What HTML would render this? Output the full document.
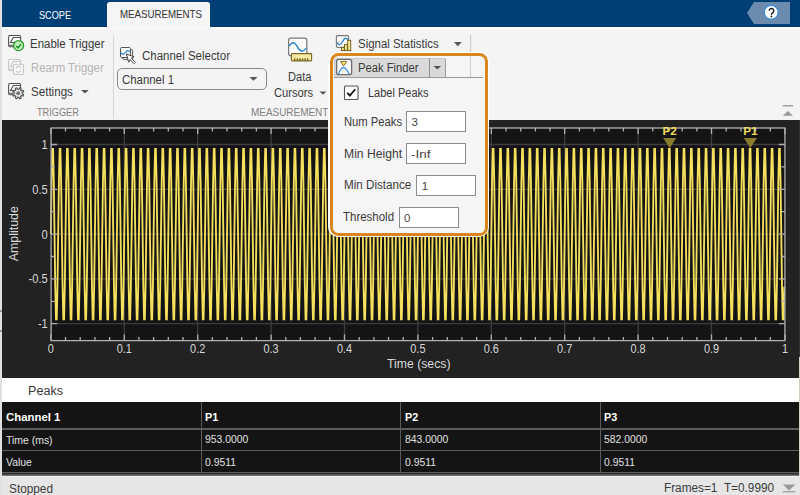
<!DOCTYPE html>
<html><head><meta charset="utf-8">
<style>
html,body{margin:0;padding:0;}
body{width:800px;height:495px;position:relative;overflow:hidden;background:#e0e0e0;font-family:"Liberation Sans",sans-serif;}
.a{position:absolute;box-sizing:border-box;}
.t{position:absolute;white-space:nowrap;line-height:1;transform-origin:0 0;font-family:"Liberation Sans",sans-serif;}
svg{position:absolute;left:0;top:0;}
svg text{font-family:"Liberation Sans",sans-serif;}
</style></head><body>
<!-- tab bar -->
<div class="a" style="left:2px;top:0;width:798px;height:27px;background:#003f75;"></div>
<div class="a" style="left:2px;top:27px;width:798px;height:1.5px;background:#fcfcfc;"></div>
<div class="a" style="left:107px;top:2px;width:103px;height:26px;background:#f5f5f5;border-radius:3px 3px 0 0;border:1px solid #fafafa;border-bottom:none;"></div>
<!-- help -->
<svg width="800" height="30" style="left:0;top:0">
<path d="M754 2H790V24H754L747 13Z" fill="#6b8cae"/>
<circle cx="771.2" cy="12.3" r="6.9" fill="#fff" stroke="#3d8ee0" stroke-width="1.2"/>
<path d="M769.2 10.8a2.3 2.3 0 1 1 3.7 1.8q-1.4 0.9-1.4 1.9v0.3" stroke="#1a1a1a" stroke-width="1.4" fill="none"/><circle cx="771.5" cy="16.4" r="0.9" fill="#1a1a1a"/>
</svg>
<!-- toolstrip -->
<div class="a" style="left:2px;top:28.5px;width:798px;height:91.5px;background:#f4f4f4;"></div>
<div class="a" style="left:113px;top:35px;width:1px;height:84px;background:#d6d6d6;"></div>
<!-- channel dropdown -->
<div class="a" style="left:117px;top:68px;width:150px;height:22px;border:1px solid #8a8a8a;border-radius:5px;background:#f4f4f4;"></div>
<svg width="800" height="120" style="left:0;top:0">
<path d="M249.5 77h8l-4 3.8z" fill="#555"/>
<path d="M81 90h7.7l-3.85 3.6z" fill="#555"/>
<path d="M319.5 91.5h7l-3.5 3.2z" fill="#555"/>
<path d="M454 42.1h7.7l-3.85 4.1z" fill="#555"/>
<!-- enable trigger icon -->
<g fill="none" stroke="#505050" stroke-width="1.05">
<rect x="8.6" y="35.5" width="12" height="11.2" rx="1.2" fill="#fafafa"/>
<path d="M9 45.2h11.2M14.2 42.4h-3.8l3.1-4.9h6.7"/>
</g>
<circle cx="18.6" cy="45.6" r="5" fill="#c3efc0" stroke="#23a023" stroke-width="1.3"/>
<path d="M16.2 45.9l1.8 1.8 3-3.4" stroke="#138c13" stroke-width="1.4" fill="none"/>
<!-- rearm icon -->
<g fill="none" stroke="#c6c6c6" stroke-width="1.05">
<rect x="8.6" y="59.5" width="12" height="11.2" rx="1.2" fill="#f7f7f7"/>
<path d="M9 69.2h4M13.5 66.4h-3.1l3.1-4.9h6.7"/>
<rect x="13.5" y="64.2" width="10" height="10.3" rx="1.2" fill="#f7f7f7"/>
<path d="M16 68.3a2.7 2.7 0 0 1 4.8-0.8M21 70.3a2.7 2.7 0 0 1-4.8 0.8" stroke-width="1.1"/>
</g>
<!-- settings icon -->
<g fill="none" stroke="#505050" stroke-width="1.05">
<rect x="8.6" y="83.5" width="12" height="11.2" rx="1.2" fill="#fafafa"/>
<path d="M9 93.2h4M14.2 90.4h-3.8l3.1-4.9h6.7"/>
</g>
<path d="M22.15 93.83 L23.73 94.57 L23.08 96.14 L21.44 95.55 L20.55 96.44 L21.14 98.08 L19.57 98.73 L18.83 97.15 L17.57 97.15 L16.83 98.73 L15.26 98.08 L15.85 96.44 L14.96 95.55 L13.32 96.14 L12.67 94.57 L14.25 93.83 L14.25 92.57 L12.67 91.83 L13.32 90.26 L14.96 90.85 L15.85 89.96 L15.26 88.32 L16.83 87.67 L17.57 89.25 L18.83 89.25 L19.57 87.67 L21.14 88.32 L20.55 89.96 L21.44 90.85 L23.08 90.26 L23.73 91.83 L22.15 92.57Z" fill="#e6e6e6" stroke="#4a4a4a" stroke-width="1.05" stroke-linejoin="round"/>
<circle cx="18.2" cy="93.2" r="1.9" fill="#707070"/>
<!-- channel selector icon -->
<rect x="122.6" y="49.5" width="10" height="9.8" rx="1" fill="#f5f5f5" stroke="#555" stroke-width="1"/>
<rect x="120.5" y="47.5" width="10" height="10" rx="1.2" fill="#fafafa" stroke="#555" stroke-width="1"/>
<path d="M121 52.8C122.5 55 124.5 54 125.5 52.5C126.5 50.8 128.5 49.5 130.2 52" stroke="#2a86d6" stroke-width="1.2" fill="none"/>
<path d="M126.4 54L134 56.8L131.4 58.3L135.4 62.3L134 63.7L130 59.7L128.6 62.2Z" fill="#fff" stroke="#444" stroke-width="1" stroke-linejoin="round"/>
<!-- data cursors icon -->
<rect x="288.6" y="38.2" width="18.2" height="17.4" rx="2.2" fill="#fbfbfb" stroke="#777" stroke-width="1.2"/>
<path d="M289.3 46q2-3.5 4-3.3t4.2 4.2t4.3 4.3t4.2-3.2" stroke="#2a86d6" stroke-width="1.4" fill="none"/>
<rect x="291.4" y="53.6" width="20.2" height="7.3" rx="0.8" fill="#f8eda5" stroke="#7a6420" stroke-width="1.1"/>
<path d="M294 60.4l0.7-2.2l0.7 2.2M296.6 60.4l0.7-2.2l0.7 2.2M299.2 60.4l0.7-2.2l0.7 2.2M301.8 60.4l0.7-2.2l0.7 2.2M304.4 60.4l0.7-2.2l0.7 2.2M307 60.4l0.7-2.2l0.7 2.2" fill="#7a6420" stroke="#7a6420" stroke-width="0.7"/>
<!-- signal statistics icon -->
<rect x="336.4" y="35.6" width="12.2" height="11.8" rx="1.5" fill="#fbfbfb" stroke="#777" stroke-width="1.1"/>
<path d="M337 42.4q1.3 2.4 2.8 2.3t3-3.4t3-3t2.2 1.4" stroke="#2a86d6" stroke-width="1.3" fill="none"/>
<g fill="#f7e98e" stroke="#6b5418" stroke-width="0.9">
<rect x="341.5" y="47.6" width="2.8" height="3"/>
<rect x="344.5" y="44.6" width="2.8" height="6"/>
<rect x="347.7" y="40.3" width="3" height="10.3"/>
</g>
<path d="M470.6 35v43" stroke="#cfcfcf" stroke-width="1.2"/>
</svg>
<!-- plot panel -->
<div class="a" style="left:2px;top:120px;width:796.8px;height:257.5px;background:#222222;"></div>
<div class="a" style="left:798.8px;top:120px;width:1.2px;height:237px;background:#333333;"></div>
<div class="a" style="left:798.8px;top:357px;width:1.2px;height:138px;background:#d4d0c0;"></div>
<!-- collapse arrow -->
<svg width="800" height="495" style="left:0;top:0">
<path d="M782.7 105.8h10.3" stroke="#9a9a9a" stroke-width="1.4"/>
<path d="M782.7 115.7l5.15-4.6 5.15 4.6z" fill="#9a9a9a"/>
<rect x='51.1' y='128' width='733.8' height='212.6' fill='#141414'/>
<line x1='124.3' y1='128' x2='124.3' y2='340.6' stroke='#3e3e3e' stroke-width='1.3'/>
<line x1='197.7' y1='128' x2='197.7' y2='340.6' stroke='#3e3e3e' stroke-width='1.3'/>
<line x1='271.1' y1='128' x2='271.1' y2='340.6' stroke='#3e3e3e' stroke-width='1.3'/>
<line x1='344.5' y1='128' x2='344.5' y2='340.6' stroke='#3e3e3e' stroke-width='1.3'/>
<line x1='417.9' y1='128' x2='417.9' y2='340.6' stroke='#3e3e3e' stroke-width='1.3'/>
<line x1='491.3' y1='128' x2='491.3' y2='340.6' stroke='#3e3e3e' stroke-width='1.3'/>
<line x1='564.7' y1='128' x2='564.7' y2='340.6' stroke='#3e3e3e' stroke-width='1.3'/>
<line x1='638.1' y1='128' x2='638.1' y2='340.6' stroke='#3e3e3e' stroke-width='1.3'/>
<line x1='711.5' y1='128' x2='711.5' y2='340.6' stroke='#3e3e3e' stroke-width='1.3'/>
<line x1='51.1' y1='144.5' x2='784.9' y2='144.5' stroke='#3e3e3e' stroke-width='1.3'/>
<line x1='51.1' y1='189.3' x2='784.9' y2='189.3' stroke='#3e3e3e' stroke-width='1.3'/>
<line x1='51.1' y1='234.1' x2='784.9' y2='234.1' stroke='#3e3e3e' stroke-width='1.3'/>
<line x1='51.1' y1='278.9' x2='784.9' y2='278.9' stroke='#3e3e3e' stroke-width='1.3'/>
<line x1='51.1' y1='323.7' x2='784.9' y2='323.7' stroke='#3e3e3e' stroke-width='1.3'/>
<polyline points='50.85,234.1 51.58,181.4 52.32,148.9 53.05,148.9 53.79,181.4 54.52,234.1 55.25,286.8 55.99,319.3 56.72,319.3 57.46,286.8 58.19,234.1 58.93,181.4 59.66,148.9 60.39,148.9 61.13,181.4 61.86,234.1 62.60,286.8 63.33,319.3 64.06,319.3 64.80,286.8 65.53,234.1 66.27,181.4 67.00,148.9 67.73,148.9 68.47,181.4 69.20,234.1 69.94,286.8 70.67,319.3 71.40,319.3 72.14,286.8 72.87,234.1 73.61,181.4 74.34,148.9 75.08,148.9 75.81,181.4 76.54,234.1 77.28,286.8 78.01,319.3 78.75,319.3 79.48,286.8 80.21,234.1 80.95,181.4 81.68,148.9 82.42,148.9 83.15,181.4 83.88,234.1 84.62,286.8 85.35,319.3 86.09,319.3 86.82,286.8 87.56,234.1 88.29,181.4 89.02,148.9 89.76,148.9 90.49,181.4 91.23,234.1 91.96,286.8 92.69,319.3 93.43,319.3 94.16,286.8 94.90,234.1 95.63,181.4 96.36,148.9 97.10,148.9 97.83,181.4 98.57,234.1 99.30,286.8 100.03,319.3 100.77,319.3 101.50,286.8 102.24,234.1 102.97,181.4 103.71,148.9 104.44,148.9 105.17,181.4 105.91,234.1 106.64,286.8 107.38,319.3 108.11,319.3 108.84,286.8 109.58,234.1 110.31,181.4 111.05,148.9 111.78,148.9 112.51,181.4 113.25,234.1 113.98,286.8 114.72,319.3 115.45,319.3 116.18,286.8 116.92,234.1 117.65,181.4 118.39,148.9 119.12,148.9 119.86,181.4 120.59,234.1 121.32,286.8 122.06,319.3 122.79,319.3 123.53,286.8 124.26,234.1 124.99,181.4 125.73,148.9 126.46,148.9 127.20,181.4 127.93,234.1 128.66,286.8 129.40,319.3 130.13,319.3 130.87,286.8 131.60,234.1 132.34,181.4 133.07,148.9 133.80,148.9 134.54,181.4 135.27,234.1 136.01,286.8 136.74,319.3 137.47,319.3 138.21,286.8 138.94,234.1 139.68,181.4 140.41,148.9 141.14,148.9 141.88,181.4 142.61,234.1 143.35,286.8 144.08,319.3 144.81,319.3 145.55,286.8 146.28,234.1 147.02,181.4 147.75,148.9 148.49,148.9 149.22,181.4 149.95,234.1 150.69,286.8 151.42,319.3 152.16,319.3 152.89,286.8 153.62,234.1 154.36,181.4 155.09,148.9 155.83,148.9 156.56,181.4 157.29,234.1 158.03,286.8 158.76,319.3 159.50,319.3 160.23,286.8 160.97,234.1 161.70,181.4 162.43,148.9 163.17,148.9 163.90,181.4 164.64,234.1 165.37,286.8 166.10,319.3 166.84,319.3 167.57,286.8 168.31,234.1 169.04,181.4 169.77,148.9 170.51,148.9 171.24,181.4 171.98,234.1 172.71,286.8 173.44,319.3 174.18,319.3 174.91,286.8 175.65,234.1 176.38,181.4 177.12,148.9 177.85,148.9 178.58,181.4 179.32,234.1 180.05,286.8 180.79,319.3 181.52,319.3 182.25,286.8 182.99,234.1 183.72,181.4 184.46,148.9 185.19,148.9 185.92,181.4 186.66,234.1 187.39,286.8 188.13,319.3 188.86,319.3 189.59,286.8 190.33,234.1 191.06,181.4 191.80,148.9 192.53,148.9 193.27,181.4 194.00,234.1 194.73,286.8 195.47,319.3 196.20,319.3 196.94,286.8 197.67,234.1 198.40,181.4 199.14,148.9 199.87,148.9 200.61,181.4 201.34,234.1 202.07,286.8 202.81,319.3 203.54,319.3 204.28,286.8 205.01,234.1 205.75,181.4 206.48,148.9 207.21,148.9 207.95,181.4 208.68,234.1 209.42,286.8 210.15,319.3 210.88,319.3 211.62,286.8 212.35,234.1 213.09,181.4 213.82,148.9 214.55,148.9 215.29,181.4 216.02,234.1 216.76,286.8 217.49,319.3 218.22,319.3 218.96,286.8 219.69,234.1 220.43,181.4 221.16,148.9 221.90,148.9 222.63,181.4 223.36,234.1 224.10,286.8 224.83,319.3 225.57,319.3 226.30,286.8 227.03,234.1 227.77,181.4 228.50,148.9 229.24,148.9 229.97,181.4 230.70,234.1 231.44,286.8 232.17,319.3 232.91,319.3 233.64,286.8 234.38,234.1 235.11,181.4 235.84,148.9 236.58,148.9 237.31,181.4 238.05,234.1 238.78,286.8 239.51,319.3 240.25,319.3 240.98,286.8 241.72,234.1 242.45,181.4 243.18,148.9 243.92,148.9 244.65,181.4 245.39,234.1 246.12,286.8 246.85,319.3 247.59,319.3 248.32,286.8 249.06,234.1 249.79,181.4 250.53,148.9 251.26,148.9 251.99,181.4 252.73,234.1 253.46,286.8 254.20,319.3 254.93,319.3 255.66,286.8 256.40,234.1 257.13,181.4 257.87,148.9 258.60,148.9 259.33,181.4 260.07,234.1 260.80,286.8 261.54,319.3 262.27,319.3 263.00,286.8 263.74,234.1 264.47,181.4 265.21,148.9 265.94,148.9 266.68,181.4 267.41,234.1 268.14,286.8 268.88,319.3 269.61,319.3 270.35,286.8 271.08,234.1 271.81,181.4 272.55,148.9 273.28,148.9 274.02,181.4 274.75,234.1 275.48,286.8 276.22,319.3 276.95,319.3 277.69,286.8 278.42,234.1 279.16,181.4 279.89,148.9 280.62,148.9 281.36,181.4 282.09,234.1 282.83,286.8 283.56,319.3 284.29,319.3 285.03,286.8 285.76,234.1 286.50,181.4 287.23,148.9 287.96,148.9 288.70,181.4 289.43,234.1 290.17,286.8 290.90,319.3 291.63,319.3 292.37,286.8 293.10,234.1 293.84,181.4 294.57,148.9 295.31,148.9 296.04,181.4 296.77,234.1 297.51,286.8 298.24,319.3 298.98,319.3 299.71,286.8 300.44,234.1 301.18,181.4 301.91,148.9 302.65,148.9 303.38,181.4 304.11,234.1 304.85,286.8 305.58,319.3 306.32,319.3 307.05,286.8 307.79,234.1 308.52,181.4 309.25,148.9 309.99,148.9 310.72,181.4 311.46,234.1 312.19,286.8 312.92,319.3 313.66,319.3 314.39,286.8 315.13,234.1 315.86,181.4 316.59,148.9 317.33,148.9 318.06,181.4 318.80,234.1 319.53,286.8 320.26,319.3 321.00,319.3 321.73,286.8 322.47,234.1 323.20,181.4 323.94,148.9 324.67,148.9 325.40,181.4 326.14,234.1 326.87,286.8 327.61,319.3 328.34,319.3 329.07,286.8 329.81,234.1 330.54,181.4 331.28,148.9 332.01,148.9 332.74,181.4 333.48,234.1 334.21,286.8 334.95,319.3 335.68,319.3 336.41,286.8 337.15,234.1 337.88,181.4 338.62,148.9 339.35,148.9 340.09,181.4 340.82,234.1 341.55,286.8 342.29,319.3 343.02,319.3 343.76,286.8 344.49,234.1 345.22,181.4 345.96,148.9 346.69,148.9 347.43,181.4 348.16,234.1 348.89,286.8 349.63,319.3 350.36,319.3 351.10,286.8 351.83,234.1 352.57,181.4 353.30,148.9 354.03,148.9 354.77,181.4 355.50,234.1 356.24,286.8 356.97,319.3 357.70,319.3 358.44,286.8 359.17,234.1 359.91,181.4 360.64,148.9 361.37,148.9 362.11,181.4 362.84,234.1 363.58,286.8 364.31,319.3 365.04,319.3 365.78,286.8 366.51,234.1 367.25,181.4 367.98,148.9 368.72,148.9 369.45,181.4 370.18,234.1 370.92,286.8 371.65,319.3 372.39,319.3 373.12,286.8 373.85,234.1 374.59,181.4 375.32,148.9 376.06,148.9 376.79,181.4 377.52,234.1 378.26,286.8 378.99,319.3 379.73,319.3 380.46,286.8 381.20,234.1 381.93,181.4 382.66,148.9 383.40,148.9 384.13,181.4 384.87,234.1 385.60,286.8 386.33,319.3 387.07,319.3 387.80,286.8 388.54,234.1 389.27,181.4 390.00,148.9 390.74,148.9 391.47,181.4 392.21,234.1 392.94,286.8 393.67,319.3 394.41,319.3 395.14,286.8 395.88,234.1 396.61,181.4 397.35,148.9 398.08,148.9 398.81,181.4 399.55,234.1 400.28,286.8 401.02,319.3 401.75,319.3 402.48,286.8 403.22,234.1 403.95,181.4 404.69,148.9 405.42,148.9 406.15,181.4 406.89,234.1 407.62,286.8 408.36,319.3 409.09,319.3 409.82,286.8 410.56,234.1 411.29,181.4 412.03,148.9 412.76,148.9 413.50,181.4 414.23,234.1 414.96,286.8 415.70,319.3 416.43,319.3 417.17,286.8 417.90,234.1 418.63,181.4 419.37,148.9 420.10,148.9 420.84,181.4 421.57,234.1 422.30,286.8 423.04,319.3 423.77,319.3 424.51,286.8 425.24,234.1 425.98,181.4 426.71,148.9 427.44,148.9 428.18,181.4 428.91,234.1 429.65,286.8 430.38,319.3 431.11,319.3 431.85,286.8 432.58,234.1 433.32,181.4 434.05,148.9 434.78,148.9 435.52,181.4 436.25,234.1 436.99,286.8 437.72,319.3 438.45,319.3 439.19,286.8 439.92,234.1 440.66,181.4 441.39,148.9 442.13,148.9 442.86,181.4 443.59,234.1 444.33,286.8 445.06,319.3 445.80,319.3 446.53,286.8 447.26,234.1 448.00,181.4 448.73,148.9 449.47,148.9 450.20,181.4 450.93,234.1 451.67,286.8 452.40,319.3 453.14,319.3 453.87,286.8 454.61,234.1 455.34,181.4 456.07,148.9 456.81,148.9 457.54,181.4 458.28,234.1 459.01,286.8 459.74,319.3 460.48,319.3 461.21,286.8 461.95,234.1 462.68,181.4 463.41,148.9 464.15,148.9 464.88,181.4 465.62,234.1 466.35,286.8 467.08,319.3 467.82,319.3 468.55,286.8 469.29,234.1 470.02,181.4 470.76,148.9 471.49,148.9 472.22,181.4 472.96,234.1 473.69,286.8 474.43,319.3 475.16,319.3 475.89,286.8 476.63,234.1 477.36,181.4 478.10,148.9 478.83,148.9 479.56,181.4 480.30,234.1 481.03,286.8 481.77,319.3 482.50,319.3 483.23,286.8 483.97,234.1 484.70,181.4 485.44,148.9 486.17,148.9 486.91,181.4 487.64,234.1 488.37,286.8 489.11,319.3 489.84,319.3 490.58,286.8 491.31,234.1 492.04,181.4 492.78,148.9 493.51,148.9 494.25,181.4 494.98,234.1 495.71,286.8 496.45,319.3 497.18,319.3 497.92,286.8 498.65,234.1 499.39,181.4 500.12,148.9 500.85,148.9 501.59,181.4 502.32,234.1 503.06,286.8 503.79,319.3 504.52,319.3 505.26,286.8 505.99,234.1 506.73,181.4 507.46,148.9 508.19,148.9 508.93,181.4 509.66,234.1 510.40,286.8 511.13,319.3 511.86,319.3 512.60,286.8 513.33,234.1 514.07,181.4 514.80,148.9 515.54,148.9 516.27,181.4 517.00,234.1 517.74,286.8 518.47,319.3 519.21,319.3 519.94,286.8 520.67,234.1 521.41,181.4 522.14,148.9 522.88,148.9 523.61,181.4 524.34,234.1 525.08,286.8 525.81,319.3 526.55,319.3 527.28,286.8 528.01,234.1 528.75,181.4 529.48,148.9 530.22,148.9 530.95,181.4 531.69,234.1 532.42,286.8 533.15,319.3 533.89,319.3 534.62,286.8 535.36,234.1 536.09,181.4 536.82,148.9 537.56,148.9 538.29,181.4 539.03,234.1 539.76,286.8 540.49,319.3 541.23,319.3 541.96,286.8 542.70,234.1 543.43,181.4 544.17,148.9 544.90,148.9 545.63,181.4 546.37,234.1 547.10,286.8 547.84,319.3 548.57,319.3 549.30,286.8 550.04,234.1 550.77,181.4 551.51,148.9 552.24,148.9 552.97,181.4 553.71,234.1 554.44,286.8 555.18,319.3 555.91,319.3 556.64,286.8 557.38,234.1 558.11,181.4 558.85,148.9 559.58,148.9 560.32,181.4 561.05,234.1 561.78,286.8 562.52,319.3 563.25,319.3 563.99,286.8 564.72,234.1 565.45,181.4 566.19,148.9 566.92,148.9 567.66,181.4 568.39,234.1 569.12,286.8 569.86,319.3 570.59,319.3 571.33,286.8 572.06,234.1 572.80,181.4 573.53,148.9 574.26,148.9 575.00,181.4 575.73,234.1 576.47,286.8 577.20,319.3 577.93,319.3 578.67,286.8 579.40,234.1 580.14,181.4 580.87,148.9 581.60,148.9 582.34,181.4 583.07,234.1 583.81,286.8 584.54,319.3 585.27,319.3 586.01,286.8 586.74,234.1 587.48,181.4 588.21,148.9 588.95,148.9 589.68,181.4 590.41,234.1 591.15,286.8 591.88,319.3 592.62,319.3 593.35,286.8 594.08,234.1 594.82,181.4 595.55,148.9 596.29,148.9 597.02,181.4 597.75,234.1 598.49,286.8 599.22,319.3 599.96,319.3 600.69,286.8 601.43,234.1 602.16,181.4 602.89,148.9 603.63,148.9 604.36,181.4 605.10,234.1 605.83,286.8 606.56,319.3 607.30,319.3 608.03,286.8 608.77,234.1 609.50,181.4 610.23,148.9 610.97,148.9 611.70,181.4 612.44,234.1 613.17,286.8 613.90,319.3 614.64,319.3 615.37,286.8 616.11,234.1 616.84,181.4 617.58,148.9 618.31,148.9 619.04,181.4 619.78,234.1 620.51,286.8 621.25,319.3 621.98,319.3 622.71,286.8 623.45,234.1 624.18,181.4 624.92,148.9 625.65,148.9 626.38,181.4 627.12,234.1 627.85,286.8 628.59,319.3 629.32,319.3 630.05,286.8 630.79,234.1 631.52,181.4 632.26,148.9 632.99,148.9 633.73,181.4 634.46,234.1 635.19,286.8 635.93,319.3 636.66,319.3 637.40,286.8 638.13,234.1 638.86,181.4 639.60,148.9 640.33,148.9 641.07,181.4 641.80,234.1 642.53,286.8 643.27,319.3 644.00,319.3 644.74,286.8 645.47,234.1 646.21,181.4 646.94,148.9 647.67,148.9 648.41,181.4 649.14,234.1 649.88,286.8 650.61,319.3 651.34,319.3 652.08,286.8 652.81,234.1 653.55,181.4 654.28,148.9 655.01,148.9 655.75,181.4 656.48,234.1 657.22,286.8 657.95,319.3 658.68,319.3 659.42,286.8 660.15,234.1 660.89,181.4 661.62,148.9 662.36,148.9 663.09,181.4 663.82,234.1 664.56,286.8 665.29,319.3 666.03,319.3 666.76,286.8 667.49,234.1 668.23,181.4 668.96,148.9 669.70,148.9 670.43,181.4 671.16,234.1 671.90,286.8 672.63,319.3 673.37,319.3 674.10,286.8 674.84,234.1 675.57,181.4 676.30,148.9 677.04,148.9 677.77,181.4 678.51,234.1 679.24,286.8 679.97,319.3 680.71,319.3 681.44,286.8 682.18,234.1 682.91,181.4 683.64,148.9 684.38,148.9 685.11,181.4 685.85,234.1 686.58,286.8 687.31,319.3 688.05,319.3 688.78,286.8 689.52,234.1 690.25,181.4 690.99,148.9 691.72,148.9 692.45,181.4 693.19,234.1 693.92,286.8 694.66,319.3 695.39,319.3 696.12,286.8 696.86,234.1 697.59,181.4 698.33,148.9 699.06,148.9 699.79,181.4 700.53,234.1 701.26,286.8 702.00,319.3 702.73,319.3 703.46,286.8 704.20,234.1 704.93,181.4 705.67,148.9 706.40,148.9 707.14,181.4 707.87,234.1 708.60,286.8 709.34,319.3 710.07,319.3 710.81,286.8 711.54,234.1 712.27,181.4 713.01,148.9 713.74,148.9 714.48,181.4 715.21,234.1 715.94,286.8 716.68,319.3 717.41,319.3 718.15,286.8 718.88,234.1 719.62,181.4 720.35,148.9 721.08,148.9 721.82,181.4 722.55,234.1 723.29,286.8 724.02,319.3 724.75,319.3 725.49,286.8 726.22,234.1 726.96,181.4 727.69,148.9 728.42,148.9 729.16,181.4 729.89,234.1 730.63,286.8 731.36,319.3 732.09,319.3 732.83,286.8 733.56,234.1 734.30,181.4 735.03,148.9 735.77,148.9 736.50,181.4 737.23,234.1 737.97,286.8 738.70,319.3 739.44,319.3 740.17,286.8 740.90,234.1 741.64,181.4 742.37,148.9 743.11,148.9 743.84,181.4 744.57,234.1 745.31,286.8 746.04,319.3 746.78,319.3 747.51,286.8 748.25,234.1 748.98,181.4 749.71,148.9 750.45,148.9 751.18,181.4 751.92,234.1 752.65,286.8 753.38,319.3 754.12,319.3 754.85,286.8 755.59,234.1 756.32,181.4 757.05,148.9 757.79,148.9 758.52,181.4 759.26,234.1 759.99,286.8 760.72,319.3 761.46,319.3 762.19,286.8 762.93,234.1 763.66,181.4 764.40,148.9 765.13,148.9 765.86,181.4 766.60,234.1 767.33,286.8 768.07,319.3 768.80,319.3 769.53,286.8 770.27,234.1 771.00,181.4 771.74,148.9 772.47,148.9 773.20,181.4 773.94,234.1 774.67,286.8 775.41,319.3 776.14,319.3 776.87,286.8 777.61,234.1 778.34,181.4 779.08,148.9 779.81,148.9 780.55,181.4 781.28,234.1 782.01,286.8 782.75,319.3 783.48,319.3 784.22,286.8' fill='none' stroke='#f5e05e' stroke-width='1.85'/>
<rect x='51.1' y='128' width='733.8' height='212.6' fill='none' stroke='#b0b0b0' stroke-width='1.3'/>
<path d='M50.9 340.6v-6M50.9 128v6M65.5 340.6v-3.5M65.5 128v3.5M80.2 340.6v-3.5M80.2 128v3.5M94.9 340.6v-3.5M94.9 128v3.5M109.6 340.6v-3.5M109.6 128v3.5M124.3 340.6v-6M124.3 128v6M138.9 340.6v-3.5M138.9 128v3.5M153.6 340.6v-3.5M153.6 128v3.5M168.3 340.6v-3.5M168.3 128v3.5M183.0 340.6v-3.5M183.0 128v3.5M197.7 340.6v-6M197.7 128v6M212.4 340.6v-3.5M212.4 128v3.5M227.0 340.6v-3.5M227.0 128v3.5M241.7 340.6v-3.5M241.7 128v3.5M256.4 340.6v-3.5M256.4 128v3.5M271.1 340.6v-6M271.1 128v6M285.8 340.6v-3.5M285.8 128v3.5M300.4 340.6v-3.5M300.4 128v3.5M315.1 340.6v-3.5M315.1 128v3.5M329.8 340.6v-3.5M329.8 128v3.5M344.5 340.6v-6M344.5 128v6M359.2 340.6v-3.5M359.2 128v3.5M373.9 340.6v-3.5M373.9 128v3.5M388.5 340.6v-3.5M388.5 128v3.5M403.2 340.6v-3.5M403.2 128v3.5M417.9 340.6v-6M417.9 128v6M432.6 340.6v-3.5M432.6 128v3.5M447.3 340.6v-3.5M447.3 128v3.5M461.9 340.6v-3.5M461.9 128v3.5M476.6 340.6v-3.5M476.6 128v3.5M491.3 340.6v-6M491.3 128v6M506.0 340.6v-3.5M506.0 128v3.5M520.7 340.6v-3.5M520.7 128v3.5M535.4 340.6v-3.5M535.4 128v3.5M550.0 340.6v-3.5M550.0 128v3.5M564.7 340.6v-6M564.7 128v6M579.4 340.6v-3.5M579.4 128v3.5M594.1 340.6v-3.5M594.1 128v3.5M608.8 340.6v-3.5M608.8 128v3.5M623.4 340.6v-3.5M623.4 128v3.5M638.1 340.6v-6M638.1 128v6M652.8 340.6v-3.5M652.8 128v3.5M667.5 340.6v-3.5M667.5 128v3.5M682.2 340.6v-3.5M682.2 128v3.5M696.9 340.6v-3.5M696.9 128v3.5M711.5 340.6v-6M711.5 128v6M726.2 340.6v-3.5M726.2 128v3.5M740.9 340.6v-3.5M740.9 128v3.5M755.6 340.6v-3.5M755.6 128v3.5M770.3 340.6v-3.5M770.3 128v3.5M785.0 340.6v-6M785.0 128v6M51.1 323.7h6M784.9 323.7h-6M51.1 301.3h3.5M784.9 301.3h-3.5M51.1 278.9h6M784.9 278.9h-6M51.1 256.5h3.5M784.9 256.5h-3.5M51.1 234.1h6M784.9 234.1h-6M51.1 211.7h3.5M784.9 211.7h-3.5M51.1 189.3h6M784.9 189.3h-6M51.1 166.9h3.5M784.9 166.9h-3.5M51.1 144.5h6M784.9 144.5h-6' stroke='#b0b0b0' stroke-width='1.3' fill='none'/>
<text x='50.9' y='353' text-anchor='middle' font-size='12.4' fill='#d9d9d9' textLength='6.1' lengthAdjust='spacingAndGlyphs'>0</text>
<text x='124.3' y='353' text-anchor='middle' font-size='12.4' fill='#d9d9d9' textLength='15.2' lengthAdjust='spacingAndGlyphs'>0.1</text>
<text x='197.7' y='353' text-anchor='middle' font-size='12.4' fill='#d9d9d9' textLength='15.2' lengthAdjust='spacingAndGlyphs'>0.2</text>
<text x='271.1' y='353' text-anchor='middle' font-size='12.4' fill='#d9d9d9' textLength='15.2' lengthAdjust='spacingAndGlyphs'>0.3</text>
<text x='344.5' y='353' text-anchor='middle' font-size='12.4' fill='#d9d9d9' textLength='15.2' lengthAdjust='spacingAndGlyphs'>0.4</text>
<text x='417.9' y='353' text-anchor='middle' font-size='12.4' fill='#d9d9d9' textLength='15.2' lengthAdjust='spacingAndGlyphs'>0.5</text>
<text x='491.3' y='353' text-anchor='middle' font-size='12.4' fill='#d9d9d9' textLength='15.2' lengthAdjust='spacingAndGlyphs'>0.6</text>
<text x='564.7' y='353' text-anchor='middle' font-size='12.4' fill='#d9d9d9' textLength='15.2' lengthAdjust='spacingAndGlyphs'>0.7</text>
<text x='638.1' y='353' text-anchor='middle' font-size='12.4' fill='#d9d9d9' textLength='15.2' lengthAdjust='spacingAndGlyphs'>0.8</text>
<text x='711.5' y='353' text-anchor='middle' font-size='12.4' fill='#d9d9d9' textLength='15.2' lengthAdjust='spacingAndGlyphs'>0.9</text>
<text x='785.0' y='353' text-anchor='middle' font-size='12.4' fill='#d9d9d9' textLength='6.1' lengthAdjust='spacingAndGlyphs'>1</text>
<text x='47.8' y='148.9' text-anchor='end' font-size='12.4' fill='#d9d9d9' textLength='6.2' lengthAdjust='spacingAndGlyphs'>1</text>
<text x='47.8' y='193.7' text-anchor='end' font-size='12.4' fill='#d9d9d9' textLength='15.5' lengthAdjust='spacingAndGlyphs'>0.5</text>
<text x='47.8' y='238.5' text-anchor='end' font-size='12.4' fill='#d9d9d9' textLength='6.2' lengthAdjust='spacingAndGlyphs'>0</text>
<text x='47.8' y='283.3' text-anchor='end' font-size='12.4' fill='#d9d9d9' textLength='19.2' lengthAdjust='spacingAndGlyphs'>-0.5</text>
<text x='47.8' y='328.1' text-anchor='end' font-size='12.4' fill='#d9d9d9' textLength='9.9' lengthAdjust='spacingAndGlyphs'>-1</text>
<text transform='translate(18.4,233.7) rotate(-90)' text-anchor='middle' font-size='12' fill='#d9d9d9' textLength='55' lengthAdjust='spacingAndGlyphs'>Amplitude</text>
<path d='M743.8 138h13.2l-6.6 10z' fill='#8a7e2e'/>
<text x='750.4' y='135.4' text-anchor='middle' font-size='11.6' font-weight='700' fill='#f0dc5a'>P1</text>
<path d='M663.1 138h13.2l-6.6 10z' fill='#8a7e2e'/>
<text x='669.7' y='135.4' text-anchor='middle' font-size='11.6' font-weight='700' fill='#f0dc5a'>P2</text>
</svg>
<div class="a" style="left:0;top:310.3px;width:2px;height:2px;background:#9a9a9a;"></div>
<div class="a" style="left:0;top:329.8px;width:2px;height:2px;background:#9a9a9a;"></div>
<!-- peaks panel -->
<div class="a" style="left:2px;top:377.5px;width:797px;height:24.5px;background:#ffffff;"></div>
<div class="a" style="left:2px;top:402px;width:797px;height:71px;background:#141414;"></div>
<div class="a" style="left:2px;top:428px;width:797px;height:1.5px;background:#5c5c5c;"></div>
<div class="a" style="left:2px;top:449.7px;width:797px;height:1.5px;background:#5c5c5c;"></div>
<div class="a" style="left:2px;top:471.5px;width:797px;height:1.5px;background:#5c5c5c;"></div>
<div class="a" style="left:2px;top:473px;width:797px;height:3px;background:linear-gradient(#1c1c1c,#808080);"></div>
<div class="a" style="left:201.3px;top:402px;width:1.2px;height:71px;background:#5c5c5c;"></div>
<div class="a" style="left:400.1px;top:402px;width:1.2px;height:71px;background:#5c5c5c;"></div>
<div class="a" style="left:600.1px;top:402px;width:1.2px;height:71px;background:#5c5c5c;"></div>
<!-- status bar -->
<div class="a" style="left:2px;top:476px;width:798px;height:19px;background:#e6e6e6;border-top:1px solid #f2f2f2;"></div>
<svg width="800" height="495" style="left:0;top:0">
<path d="M782.8 484.5h12.5l-6.25 6z" fill="#9a9a9a"/>
<path d="M782.8 491.7h12.5" stroke="#9a9a9a" stroke-width="1.2"/>
</svg>
<span class='t' style='left:39px;top:9.77px;font-size:11.5px;color:#ffffff;font-weight:400;transform:scaleX(0.795);'>SCOPE</span>
<span class='t' style='left:119.5px;top:9.47px;font-size:11.5px;color:#333333;font-weight:400;transform:scaleX(0.844);'>MEASUREMENTS</span>
<span class='t' style='left:30.3px;top:37.84px;font-size:12px;color:#3a3a3a;font-weight:400;transform:scaleX(0.955);'>Enable Trigger</span>
<span class='t' style='left:30.5px;top:61.84px;font-size:12px;color:#b4b4b4;font-weight:400;transform:scaleX(0.948);'>Rearm Trigger</span>
<span class='t' style='left:31px;top:86.24px;font-size:12px;color:#3a3a3a;font-weight:400;transform:scaleX(0.966);'>Settings</span>
<span class='t' style='left:36.5px;top:107.49px;font-size:11px;color:#808080;font-weight:400;transform:scaleX(0.836);'>TRIGGER</span>
<span class='t' style='left:142.2px;top:49.94px;font-size:12px;color:#3a3a3a;font-weight:400;transform:scaleX(0.956);'>Channel Selector</span>
<span class='t' style='left:122px;top:73.74px;font-size:12px;color:#3a3a3a;font-weight:400;transform:scaleX(0.950);'>Channel 1</span>
<span class='t' style='left:287.6px;top:71.24px;font-size:12px;color:#3a3a3a;font-weight:400;transform:scaleX(0.923);'>Data</span>
<span class='t' style='left:273.6px;top:87.24px;font-size:12px;color:#3a3a3a;font-weight:400;transform:scaleX(0.931);'>Cursors</span>
<span class='t' style='left:250.9px;top:106.99px;font-size:11px;color:#808080;font-weight:400;transform:scaleX(0.904);'>MEASUREMENTS</span>
<span class='t' style='left:358.1px;top:37.64px;font-size:12px;color:#3a3a3a;font-weight:400;transform:scaleX(0.953);'>Signal Statistics</span>
<span class='t' style='left:386.5px;top:357.84px;font-size:12px;color:#d9d9d9;font-weight:400;transform:scaleX(1.020);'>Time (secs)</span>
<span class='t' style='left:28.1px;top:385.04px;font-size:12px;color:#3a3a3a;font-weight:400;transform:scaleX(1.049);'>Peaks</span>
<span class='t' style='left:6px;top:412.09px;font-size:11px;color:#ffffff;font-weight:700;transform:scaleX(1.035);'>Channel 1</span>
<span class='t' style='left:205.4px;top:411.89px;font-size:11px;color:#ffffff;font-weight:700;transform:scaleX(0.980);'>P1</span>
<span class='t' style='left:404.9px;top:411.89px;font-size:11px;color:#ffffff;font-weight:700;transform:scaleX(0.980);'>P2</span>
<span class='t' style='left:603.7px;top:411.89px;font-size:11px;color:#ffffff;font-weight:700;transform:scaleX(0.980);'>P3</span>
<span class='t' style='left:6.4px;top:434.69px;font-size:11px;color:#e0e0e0;font-weight:400;transform:scaleX(0.949);'>Time (ms)</span>
<span class='t' style='left:205.4px;top:433.99px;font-size:11px;color:#e0e0e0;font-weight:400;transform:scaleX(0.944);'>953.0000</span>
<span class='t' style='left:404.9px;top:433.99px;font-size:11px;color:#e0e0e0;font-weight:400;transform:scaleX(0.944);'>843.0000</span>
<span class='t' style='left:603.7px;top:433.99px;font-size:11px;color:#e0e0e0;font-weight:400;transform:scaleX(0.944);'>582.0000</span>
<span class='t' style='left:6px;top:456.69px;font-size:11px;color:#e0e0e0;font-weight:400;transform:scaleX(0.944);'>Value</span>
<span class='t' style='left:205.4px;top:456.69px;font-size:11px;color:#e0e0e0;font-weight:400;transform:scaleX(0.941);'>0.9511</span>
<span class='t' style='left:404.9px;top:456.69px;font-size:11px;color:#e0e0e0;font-weight:400;transform:scaleX(0.941);'>0.9511</span>
<span class='t' style='left:603.7px;top:456.69px;font-size:11px;color:#e0e0e0;font-weight:400;transform:scaleX(0.941);'>0.9511</span>
<span class='t' style='left:9px;top:482.64px;font-size:12px;color:#3a3a3a;font-weight:400;transform:scaleX(0.984);'>Stopped</span>
<span class='t' style='left:664.2px;top:482.24px;font-size:12px;color:#3a3a3a;font-weight:400;transform:scaleX(0.982);'>Frames=1  T=0.9990</span>
<div style="position:absolute;left:0;top:0;width:800px;height:495px;z-index:5">
<!-- popup -->
<div class="a" style="left:328px;top:51.8px;width:161.2px;height:185.3px;border-radius:10px;background:#ffffff;"></div>
<div class="a" style="left:329.5px;top:53.3px;width:158.2px;height:182.3px;border:3px solid #da861f;border-radius:8.5px;background:#f5f5f5;"></div>
<div class="a" style="left:334px;top:57.6px;width:112.2px;height:20px;background:#dadada;border:1px solid #c8c8c8;border-right:1.3px solid #9a9a9a;border-radius:2px;"></div>
<div class="a" style="left:428.8px;top:58px;width:1.3px;height:19px;background:#8e8e8e;"></div>
<div class="a" style="left:334px;top:77px;width:149px;height:1px;background:#9a9a9a;"></div>
<div class="a" style="left:470px;top:56px;width:1.2px;height:21px;background:#cfcfcf;"></div>
<svg width="800" height="495" style="left:0;top:0">
<path d="M433.4 65.9h7.8l-3.9 3.7z" fill="#555"/>
<!-- peak finder icon -->
<rect x="336.6" y="59.4" width="15" height="15.2" rx="2.2" fill="#fbfbfb" stroke="#6e6e6e" stroke-width="1.3"/>
<path d="M340.5 61.4h6.2l-3.1 4.6z" fill="#f3e26a" stroke="#6b5418" stroke-width="0.8" stroke-linejoin="round"/>
<path d="M338.3 74q2.5-5.6 5.3-6.6q2.8 1 5.6 6.6" stroke="#3a91e0" stroke-width="1.2" fill="none"/>
<!-- checkbox -->
<rect x="344.5" y="86" width="13.5" height="13.5" rx="1" fill="#fff" stroke="#555" stroke-width="1.1"/>
<path d="M347.3 92.8l2.6 2.8 5.3-6.3" stroke="#111" stroke-width="1.7" fill="none"/>
</svg>
<div class="a" style="left:406.3px;top:111.3px;width:59.6px;height:21.2px;background:#fff;border:1px solid #8c8c8c;"></div>
<div class="a" style="left:406.3px;top:143.3px;width:59.6px;height:21.2px;background:#fff;border:1px solid #8c8c8c;"></div>
<div class="a" style="left:416px;top:175.2px;width:60px;height:21.2px;background:#fff;border:1px solid #8c8c8c;"></div>
<div class="a" style="left:399.4px;top:207px;width:59.6px;height:21.3px;background:#fff;border:1px solid #8c8c8c;"></div>
<span class='t' style='left:358.1px;top:61.54px;font-size:12px;color:#3a3a3a;font-weight:400;transform:scaleX(0.935);'>Peak Finder</span>
<span class='t' style='left:368.3px;top:86.84px;font-size:12px;color:#3a3a3a;font-weight:400;transform:scaleX(0.916);'>Label Peaks</span>
<span class='t' style='left:343.6px;top:115.84px;font-size:12px;color:#3a3a3a;font-weight:400;transform:scaleX(0.937);'>Num Peaks</span>
<span class='t' style='left:343.6px;top:147.64px;font-size:12px;color:#3a3a3a;font-weight:400;transform:scaleX(1.013);'>Min Height</span>
<span class='t' style='left:343.7px;top:179.44px;font-size:12px;color:#3a3a3a;font-weight:400;transform:scaleX(0.970);'>Min Distance</span>
<span class='t' style='left:343.1px;top:211.34px;font-size:12px;color:#3a3a3a;font-weight:400;transform:scaleX(0.956);'>Threshold</span>
<span class='t' style='left:411.4px;top:117.07px;font-size:11.5px;color:#444444;font-weight:400;'>3</span>
<span class='t' style='left:411.4px;top:148.87px;font-size:11.5px;color:#444444;font-weight:400;transform:scaleX(1.173);'>-Inf</span>
<span class='t' style='left:421.7px;top:180.67px;font-size:11.5px;color:#444444;font-weight:400;'>1</span>
<span class='t' style='left:404px;top:212.57px;font-size:11.5px;color:#444444;font-weight:400;'>0</span>
</div>
</body></html>
